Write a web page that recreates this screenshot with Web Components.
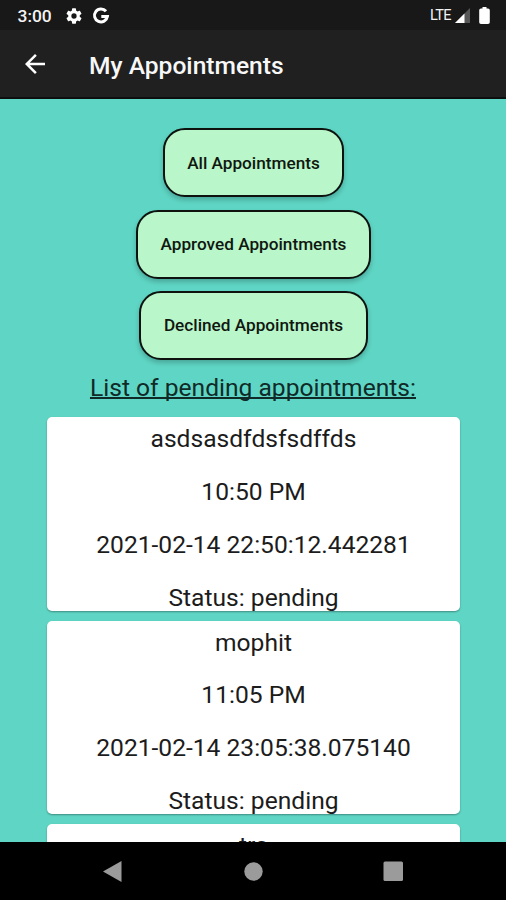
<!DOCTYPE html>
<html lang="en">
<head>
<meta charset="utf-8">
<title>My Appointments</title>
<style>
  html,
  body {
    margin: 0;
    height: 100%;
    overflow: hidden;
    font-family: Roboto, sans-serif;
  }
</style>
</head>
<body>
<appointments-page></appointments-page>

<script>
class StatusBar extends HTMLElement {
  constructor() {
    super();
    this.attachShadow({ mode: "open" });
  }

  connectedCallback() {
    this.shadowRoot.innerHTML = `
    <style>
      :host {
        display: flex;
        align-items: center;
        justify-content: space-between;
        box-sizing: border-box;
        block-size: 30px;
        padding: 1px 16px 0 17.5px;
        background: #181818;
        color: #f4f4f4;
      }

      .group {
        display: flex;
        align-items: center;
      }

      .time {
        font-size: 17.4px;
        font-weight: 500;
        margin-inline-end: 14.5px;
      }

      .network {
        font-size: 14.5px;
        letter-spacing: -0.6px;
        margin-inline-end: 4px;
      }

      svg {
        display: block;
      }

      .gear {
        margin-inline-end: 10px;
      }

      .signal {
        margin-inline-end: 9px;
      }
    </style>
    <div class="group">
      <span class="time">3:00</span>
      <svg class="gear" width="16" height="16" viewBox="2 2 20 20" fill="#fff">
        <path d="M19.14 12.94c.04-.3.06-.61.06-.94 0-.32-.02-.64-.07-.94l2.03-1.58a.49.49 0 0 0 .12-.61l-1.92-3.32a.49.49 0 0 0-.59-.22l-2.39.96a7 7 0 0 0-1.62-.94l-.36-2.54a.48.48 0 0 0-.48-.41h-3.84a.47.47 0 0 0-.47.41l-.36 2.54a7.3 7.3 0 0 0-1.62.94l-2.39-.96a.48.48 0 0 0-.59.22L2.74 8.87a.48.48 0 0 0 .12.61l2.03 1.58c-.05.3-.09.63-.09.94s.02.64.07.94l-2.03 1.58a.49.49 0 0 0-.12.61l1.92 3.32c.12.22.37.29.59.22l2.39-.96c.5.38 1.03.7 1.62.94l.36 2.54c.05.24.24.41.48.41h3.84c.24 0 .44-.17.47-.41l.36-2.54a7.3 7.3 0 0 0 1.62-.94l2.39.96c.22.08.47 0 .59-.22l1.92-3.32a.47.47 0 0 0-.12-.61zM12 15.300a3.300 3.300 0 1 1 0-6.600 3.300 3.300 0 0 1 0 6.600z"/>
      </svg>
      <svg width="18" height="18" viewBox="0 0 18 18" fill="none" stroke="#fff" stroke-width="3">
        <path d="M14 4.300A6.500 6.500 0 1 0 15.400 9.500H9.300"/>
      </svg>
    </div>
    <div class="group">
      <span class="network">LTE</span>
      <svg class="signal" width="15" height="15" viewBox="0 0 15 15">
        <path d="M0 15 15 0V15z" fill="#575757"/>
        <path d="M0 15 9.500 5.500V15z" fill="#fff"/>
      </svg>
      <svg width="11" height="17" viewBox="0 0 11 17" fill="#fff">
        <path d="M3.500 0h4v1.500H9A1.800 1.800 0 0 1 10.800 3.300v11.900A1.800 1.800 0 0 1 9 17H2A1.800 1.800 0 0 1 .2 15.200V3.300A1.800 1.800 0 0 1 2 1.500h1.500z"/>
      </svg>
    </div>
    `;
  }
}

class AppBar extends HTMLElement {
  constructor() {
    super();
    this.attachShadow({ mode: "open" });
  }

  connectedCallback() {
    this.shadowRoot.innerHTML = `
    <style>
      :host {
        display: flex;
        align-items: center;
        box-sizing: border-box;
        block-size: 69px;
        padding-block-start: 2px;
        padding-inline-start: 25px;
        gap: 44px;
        border-block-end: 2px solid #0c0f0e;
        background: #202020;
        color: #f8f8f8;
        font-size: 24.6px;
        font-weight: 500;
      }

      svg {
        display: block;
        margin-block-end: 2px;
      }

      .title {
        padding-block-start: 1px;
      }
    </style>
    <svg width="20" height="20" viewBox="4 4 16 16" fill="#fff">
      <path d="M20 11H7.830l5.590-5.590L12 4l-8 8 8 8 1.410-1.410L7.830 13H20z"/>
    </svg>
    <div class="title"><slot></slot></div>
    `;
  }
}

class FilterButton extends HTMLElement {
  constructor() {
    super();
    this.attachShadow({ mode: "open" });
  }

  connectedCallback() {
    this.shadowRoot.innerHTML = `
    <style>
      :host {
        display: block;
      }

      button {
        display: block;
        box-sizing: border-box;
        block-size: 69px;
        padding: 0 22.5px 0 22.5px;
        border: 2px solid #0d120f;
        border-radius: 22px;
        background: #b9f6ca;
        box-shadow: 0 3px 5px rgba(0, 0, 0, 0.22);
        color: #10170f;
        font: 500 17.2px Roboto, sans-serif;
      }
    </style>
    <button><slot></slot></button>
    `;
  }
}

class AppointmentCard extends HTMLElement {
  constructor() {
    super();
    this.attachShadow({ mode: "open" });
  }

  connectedCallback() {
    const fields = ["name", "time", "created", "status"]
      .filter((field) => this.hasAttribute(field))
      .map((field) => {
        const value = this.getAttribute(field);
        return `<div>${field === "status" ? "Status: " : ""}${value}</div>`;
      })
      .join("");

    this.shadowRoot.innerHTML = `
    <style>
      :host {
        display: flex;
        flex-direction: column;
        flex: none;
        gap: 23.7px;
        box-sizing: border-box;
        block-size: 193.3px;
        padding-block-start: 7px;
        border-radius: 5px;
        background: #fff;
        box-shadow: 0 1px 2px rgba(0, 0, 0, 0.35);
        color: #1c1c1c;
        font-size: 24.6px;
        line-height: 29px;
        text-align: center;
      }
    </style>
    ${fields}
    `;
  }
}

class NavBar extends HTMLElement {
  constructor() {
    super();
    this.attachShadow({ mode: "open" });
  }

  connectedCallback() {
    this.shadowRoot.innerHTML = `
    <style>
      :host {
        display: flex;
        align-items: center;
        justify-content: space-between;
        box-sizing: border-box;
        block-size: 58px;
        padding: 0 103px;
        background: #000;
      }

      svg {
        display: block;
      }
    </style>
    <svg width="20" height="21" viewBox="0 0 20 21" fill="#9b9b9b"><path d="M0 10.500 18.500 0v21z"/></svg>
    <svg width="19" height="19" viewBox="0 0 19 19" fill="#9b9b9b"><circle cx="9.500" cy="9.500" r="9.200"/></svg>
    <svg width="20" height="20" viewBox="0 0 20 20" fill="#9b9b9b"><rect x=".5" y=".5" width="19.500" height="19.500" rx="1.500"/></svg>
    `;
  }
}

class AppointmentsPage extends HTMLElement {
  constructor() {
    super();
    this.attachShadow({ mode: "open" });
  }

  connectedCallback() {
    this.shadowRoot.innerHTML = `
    <style>
      :host {
        display: flex;
        flex-direction: column;
        block-size: 100vh;
        background: #5fd6c5;
      }

      main {
        flex: 1;
        min-block-size: 0;
        overflow: hidden;
      }

      .filters {
        display: flex;
        flex-direction: column;
        align-items: center;
        gap: 12.3px;
        padding-block-start: 29.3px;
        padding-inline-start: 1px;
      }

      h2 {
        margin: 13px 0 0;
        color: #0f2a27;
        font-size: 24.6px;
        font-weight: 400;
        line-height: 29px;
        text-align: center;
        text-decoration: underline;
        text-decoration-skip-ink: none;
        text-decoration-thickness: 2px;
      }

      .list {
        display: flex;
        flex-direction: column;
        gap: 10px;
        padding: 15.600px 46px 0 47px;
      }
    </style>
    <status-bar></status-bar>
    <app-bar>My Appointments</app-bar>
    <main>
      <div class="filters">
        <filter-button>All Appointments</filter-button>
        <filter-button>Approved Appointments</filter-button>
        <filter-button>Declined Appointments</filter-button>
      </div>
      <h2>List of pending appointments:</h2>
      <div class="list">
        <appointment-card name="asdsasdfdsfsdffds" time="10:50 PM" created="2021-02-14 22:50:12.442281" status="pending"></appointment-card>
        <appointment-card name="mophit" time="11:05 PM" created="2021-02-14 23:05:38.075140" status="pending"></appointment-card>
        <appointment-card name="trs"></appointment-card>
      </div>
    </main>
    <nav-bar></nav-bar>
    `;
  }
}

customElements.define("status-bar", StatusBar);
customElements.define("app-bar", AppBar);
customElements.define("filter-button", FilterButton);
customElements.define("appointment-card", AppointmentCard);
customElements.define("nav-bar", NavBar);
customElements.define("appointments-page", AppointmentsPage);
</script>
</body>
</html>
